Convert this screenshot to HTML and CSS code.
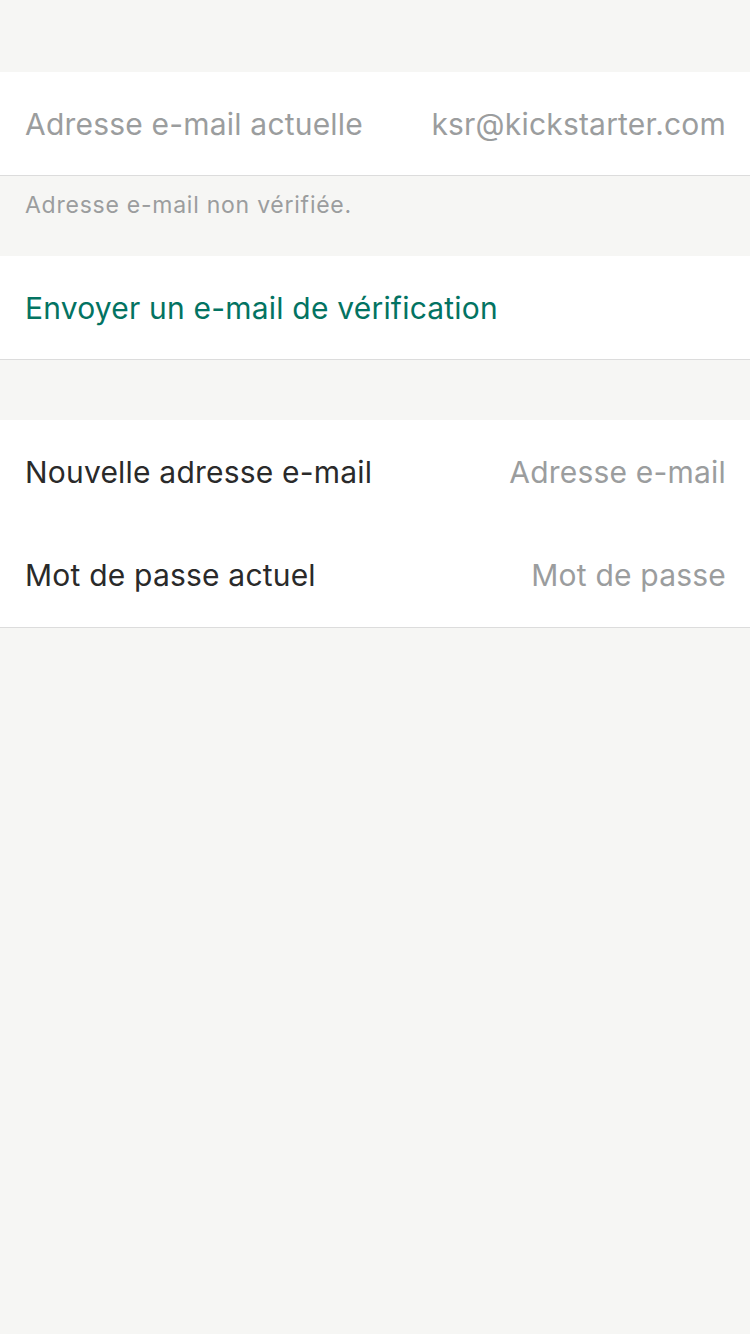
FILE: index.html
```html
<!DOCTYPE html>
<html lang="fr">
<head>
<meta charset="utf-8">
<link rel="stylesheet" href="styles.css">
</head>
<body>
<div class="screen">
  <div class="group first">
    <div class="row">
      <span class="label muted">Adresse e-mail actuelle</span>
      <span class="value muted">ksr@kickstarter.com</span>
    </div>
  </div>
  <div class="note">Adresse e-mail non vérifiée.</div>
  <div class="group">
    <div class="row">
      <span class="label action">Envoyer un e-mail de vérification</span>
    </div>
  </div>
  <div class="group spaced">
    <div class="row">
      <span class="label">Nouvelle adresse e-mail</span>
      <span class="value muted">Adresse e-mail</span>
    </div>
    <div class="row">
      <span class="label">Mot de passe actuel</span>
      <span class="value muted">Mot de passe</span>
    </div>
  </div>
</div>
</body>
</html>
```
FILE: styles.css
```css
html, body {
  margin: 0;
  padding: 0;
  background: #f6f6f4;
}
.screen {
  width: 750px;
  height: 1334px;
  background: #f6f6f4;
  font-family: Inter, "Liberation Sans", sans-serif;
  padding-top: 72px;
  box-sizing: border-box;
}
.group {
  background: #fff;
  border-bottom: 1px solid #dcdcdc;
}
.group.spaced {
  margin-top: 60px;
}
.row {
  height: 103px;
  display: flex;
  align-items: center;
  justify-content: space-between;
  padding: 0 24px 0 25px;
}
.group.spaced .row {
  height: 103.5px;
}
.label, .value {
  font-size: 30px;
  letter-spacing: 0.2px;
  color: #2a2a2a;
  white-space: nowrap;
}
.muted {
  color: #9b9d9e;
}
.action {
  color: #037362;
}
.note {
  height: 80px;
  box-sizing: border-box;
  padding: 15px 25px 0;
  font-size: 23px;
  color: #9b9d9e;
  letter-spacing: 0.75px;
}
```
